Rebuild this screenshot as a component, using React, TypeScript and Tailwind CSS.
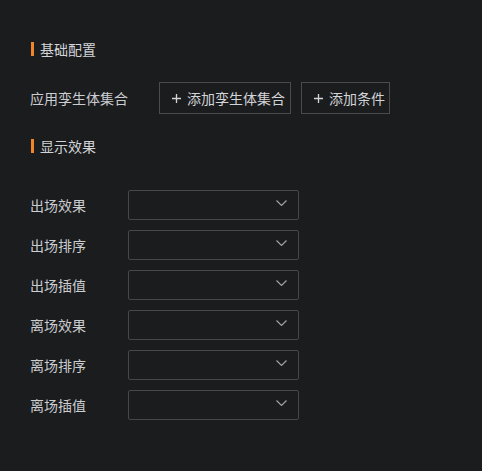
const font = { fontFamily: '"Noto Sans CJK SC", "Noto Sans", sans-serif' };

function SectionTitle({ title }: { title: string }) {
  return (
    <div className="flex items-center h-5">
      <span className="ml-px w-[3px] h-[14px] bg-[#f0862a]" />
      <span className="ml-[6px] text-[14px] leading-5 text-[#d2d4d7]">{title}</span>
    </div>
  );
}

function AddButton({ label, extra }: { label: string; extra: string }) {
  return (
    <button
      className={`flex items-center h-8 pl-[12px] ${extra} border border-[#4a4b4f] text-[14px] text-[#d2d4d7] bg-transparent`}
    >
      <svg width="9" height="9" viewBox="0 0 9 9" className="mr-[6px]">
        <path d="M4.5 0v9M0 4.5h9" stroke="#d2d4d7" strokeWidth="1.3" />
      </svg>
      {label}
    </button>
  );
}

function SelectRow({ label }: { label: string }) {
  return (
    <div className="flex items-center h-[30px]">
      <span className="w-[98px] text-[14px] leading-5 text-[#cbcdd1] -mt-px">{label}</span>
      <div className="relative w-[171px] h-[30px] border border-[#46474b] rounded-[2px]">
        <svg
          width="11"
          height="6"
          viewBox="0 0 11 6"
          className="absolute right-[11px] top-[9px]"
        >
          <path d="M0.5 0.5l5 5 5-5" fill="none" stroke="#a3a6ab" strokeWidth="1.1" />
        </svg>
      </div>
    </div>
  );
}

export default function App() {
  const rows = ['出场效果', '出场排序', '出场插值', '离场效果', '离场排序', '离场插值'];
  return (
    <div className="w-[482px] h-[471px] bg-[#1b1c1e] pl-[30px] pt-[39px]" style={font}>
      <SectionTitle title="基础配置" />

      <div className="flex items-center mt-[23px]">
        <span className="w-[129px] text-[14px] text-[#cbcdd1]">应用孪生体集合</span>
        <div className="flex gap-[10px]">
          <AddButton label="添加孪生体集合" extra="pr-[5px]" />
          <AddButton label="添加条件" extra="pr-[4px]" />
        </div>
      </div>

      <div className="mt-[22px]">
        <SectionTitle title="显示效果" />
      </div>

      <div className="mt-[34px] flex flex-col gap-[10px]">
        {rows.map((r) => (
          <SelectRow key={r} label={r} />
        ))}
      </div>
    </div>
  );
}
